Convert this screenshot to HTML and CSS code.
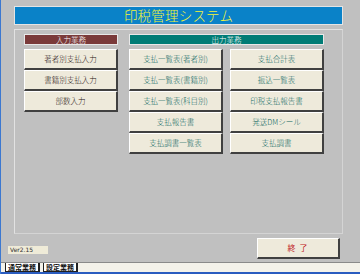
FILE: index.html
```html
<!DOCTYPE html>
<html lang="ja">
<head>
<meta charset="utf-8">
<link rel="stylesheet" href="styles.css">
</head>
<body>
<div class="window">
  <div class="screen">
    <div class="title">印税管理システム</div>
    <div class="panel">
      <div class="group group-in">
        <div class="head head-in">入力業務</div>
        <div class="btns">
          <div class="btn btn-in">著者別支払入力</div>
          <div class="btn btn-in">書籍別支払入力</div>
          <div class="btn btn-in">部数入力</div>
        </div>
      </div>
      <div class="group group-out">
        <div class="head head-out">出力業務</div>
        <div class="btns btns-out">
          <div class="btn btn-out">支払一覧表(著者別)</div>
          <div class="btn btn-out">支払合計表</div>
          <div class="btn btn-out">支払一覧表(書籍別)</div>
          <div class="btn btn-out">振込一覧表</div>
          <div class="btn btn-out">支払一覧表(科目別)</div>
          <div class="btn btn-out">印税支払報告書</div>
          <div class="btn btn-out">支払報告書</div>
          <div class="btn btn-out">発送DMシール</div>
          <div class="btn btn-out">支払調書一覧表</div>
          <div class="btn btn-out">支払調書</div>
        </div>
      </div>
    </div>
    <div class="footer">
      <div class="ver">Ver2.15</div>
      <div class="btn btn-exit">終 了</div>
    </div>
  </div>
  <div class="tabbar">
    <span class="tab tab-active">通常業務</span>
    <span class="tab">設定業務</span>
  </div>
</div>
</body>
</html>
```

FILE: styles.css
```css
* { box-sizing: border-box; }
html, body { margin: 0; padding: 0; }
body {
  width: 360px;
  height: 274px;
  background: #c0c0c0;
  font-family: "Noto Sans CJK JP", "Noto Sans", sans-serif;
  overflow: hidden;
}
.window {
  height: 274px;
  border-left: 1px solid #3c78d0;
  display: flex;
  flex-direction: column;
}
.screen {
  padding: 6px 17px 0 13px;
  flex: 1;
  display: flex;
  flex-direction: column;
}
.title {
  height: 19px;
  background: #0a82c8;
  border: 1px solid #e4e4e4;
  color: #f4f43a;
  font-size: 13.5px;
  font-weight: 300;
  line-height: 16px;
  text-align: center;
  letter-spacing: 0.2px;
}
.panel {
  margin-top: 4px;
  height: 205px;
  border: 1px solid #e2e2e2;
  border-right-color: #d4d4d4;
  border-bottom-color: #d4d4d4;
  padding: 4px 18px 0 9px;
  display: flex;
  gap: 11px;
  align-items: flex-start;
}
.group-in { width: 94px; }
.group-out { width: 195px; }
.head {
  height: 11px;
  color: #ffffff;
  font-size: 7.5px;
  font-weight: 300;
  line-height: 10px;
  text-align: center;
  border: 1px solid #e8e8e8;
}
.head-in { background: #7a3a3a; }
.head-out { background: #007c76; }
.btns {
  margin-top: 4px;
  display: flex;
  flex-direction: column;
}
.btns-out {
  display: grid;
  grid-template-columns: 94px 94px;
  column-gap: 7px;
}
.btn {
  height: 21px;
  background: #eeeadb;
  border-top: 1px solid #ffffff;
  border-left: 1px solid #ffffff;
  border-right: 2px solid #404040;
  border-bottom: 2px solid #404040;
  font-size: 7.5px;
  font-weight: 300;
  line-height: 18px;
  text-align: center;
  white-space: nowrap;
}
.btn-in { color: #1e1010; }
.btn-out { color: #0a665e; }
.footer {
  display: flex;
  justify-content: space-between;
  align-items: flex-start;
  margin-top: 4px;
  margin-left: -6px;
  margin-right: 3px;
}
.ver {
  margin-top: 8px;
  width: 40px;
  height: 8px;
  background: #efebd8;
  font-size: 6px;
  line-height: 8px;
  padding-left: 2px;
  color: #303030;
  font-family: "DejaVu Sans", sans-serif;
}
.btn-exit {
  width: 83px;
  color: #c01818;
  font-size: 8px;
  font-weight: 400;
  letter-spacing: 1px;
}
.tabbar {
  height: 12px;
  border-top: 1px solid #8a8a8a;
  background: #f4f2ea;
  border-bottom: 2px solid #2a5cc0;
  display: flex;
  padding-left: 4px;
  gap: 3px;
  align-items: flex-start;
}
.tab {
  height: 9px;
  font-size: 7px;
  line-height: 9px;
  font-weight: bold;
  color: #101010;
  background: #ffffff;
  padding: 0 2px;
  border-left: 1px solid #202020;
  border-right: 2px solid #202020;
  border-bottom: 1px solid #202020;
}
.tab-active { background: #ffffff; }
```
